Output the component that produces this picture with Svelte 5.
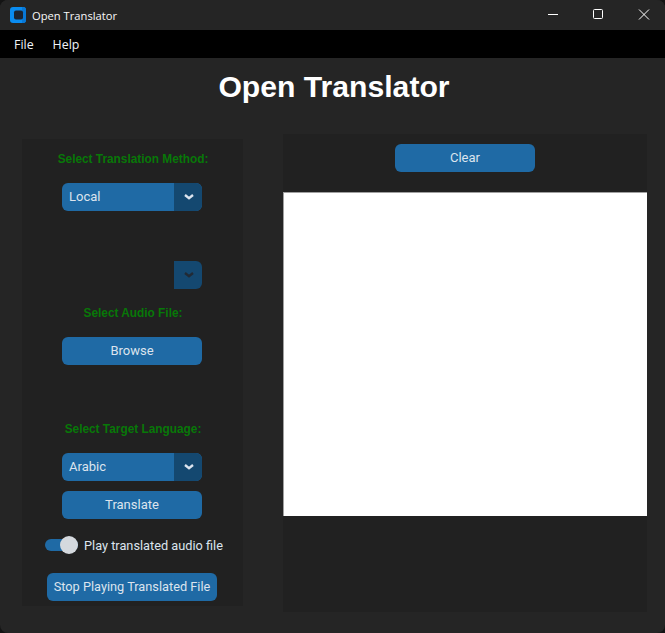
<script>
  let playAudio = true;
</script>

<div class="window">
  <header class="titlebar">
    <svg class="logo" width="16" height="16" viewBox="0 0 16 16">
      <rect width="16" height="16" rx="3" fill="#0a8cf0" />
      <path d="M12 0h1a3 3 0 0 1 3 3v10a3 3 0 0 1-3 3h-1z" fill="#0878d6" />
      <rect x="4" y="3.5" width="9" height="9" rx="2" fill="#1c2430" />
    </svg>
    <span class="app-name">Open Translator</span>
    <div class="controls">
      <svg width="46" height="30" viewBox="0 0 46 30"><path d="M19 14.5h10" stroke="#fff" fill="none" /></svg>
      <svg width="46" height="30" viewBox="0 0 46 30"><rect x="18.5" y="9.5" width="9" height="9" rx="1" stroke="#fff" fill="none" /></svg>
      <svg width="46" height="30" viewBox="0 0 46 30"><path d="M18 9.5l10 10M28 9.5l-10 10" stroke="#fff" fill="none" /></svg>
    </div>
  </header>

  <nav class="menubar">
    <span>File</span>
    <span>Help</span>
  </nav>

  <main>
    <h1>Open Translator</h1>
    <div class="columns">
      <section class="left">
        <h2>Select Translation Method:</h2>
        <div class="select first">
          <span class="value">Local</span>
          <span class="arrow"><svg width="10" height="6" viewBox="0 0 10 6"><path d="M1 1l4 3.2L9 1" stroke="#dce4ee" stroke-width="2.4" fill="none" /></svg></span>
        </div>
        <div class="select empty">
          <span class="value"></span>
          <span class="arrow"><svg width="10" height="6" viewBox="0 0 10 6"><path d="M1 1l4 3.2L9 1" stroke="#212a35" stroke-width="2.4" fill="none" /></svg></span>
        </div>
        <h2 class="audio">Select Audio File:</h2>
        <button class="btn browse">Browse</button>
        <h2 class="target">Select Target Language:</h2>
        <div class="select lang">
          <span class="value">Arabic</span>
          <span class="arrow"><svg width="10" height="6" viewBox="0 0 10 6"><path d="M1 1l4 3.2L9 1" stroke="#dce4ee" stroke-width="2.4" fill="none" /></svg></span>
        </div>
        <button class="btn translate">Translate</button>
        <label class="switch">
          <span class="track" class:on={playAudio}><span class="thumb"></span></span>
          <span>Play translated audio file</span>
        </label>
        <button class="btn stop">Stop Playing Translated File</button>
      </section>

      <section class="right">
        <button class="btn clear">Clear</button>
        <div class="canvas"></div>
      </section>
    </div>
  </main>
</div>

<style>
:global(body) {
  margin: 0;
  background: #141414;
}

.window {
  width: 665px;
  height: 633px;
  box-sizing: border-box;
  display: flex;
  flex-direction: column;
  background: #252525;
  overflow: hidden;
  border-radius: 8px;
  font-family: Roboto, sans-serif;
}

.titlebar {
  height: 30px;
  flex: none;
  display: flex;
  align-items: center;
  background: #252525;
  padding-left: 10px;
  color: #f8f8f8;
  font-family: "Open Sans", sans-serif;
  font-size: 11.2px;
}

.logo {
  margin-right: 6px;
}

.controls {
  margin-left: auto;
  margin-right: -2px;
  display: flex;
}

.controls svg {
  display: block;
}

.menubar {
  height: 28px;
  flex: none;
  display: flex;
  align-items: center;
  gap: 19px;
  padding-left: 14px;
  background: #000;
  color: #f0f4fa;
  font-family: "Open Sans", sans-serif;
  font-size: 12.4px;
}

main {
  flex: 1;
  display: flex;
  flex-direction: column;
}

h1 {
  margin: 11px 0 0;
  padding-left: 3px;
  height: 36px;
  line-height: 36px;
  text-align: center;
  font-family: "Liberation Sans", sans-serif;
  font-size: 30.15px;
  font-weight: 700;
  color: #fff;
}

.columns {
  display: flex;
  align-items: flex-start;
  padding-left: 22px;
  margin-top: 29px;
}

.left {
  width: 221px;
  height: 467px;
  box-sizing: border-box;
  margin-top: 5px;
  padding: 13px 1px 0 0;
  display: flex;
  flex-direction: column;
  align-items: center;
  background: #212121;
}

h2 {
  margin: 0 0 0 2px;
  height: 14px;
  line-height: 14px;
  font-family: "Liberation Sans", sans-serif;
  font-size: 11.85px;
  font-weight: 700;
  color: #087808;
}

.select {
  width: 140px;
  height: 28px;
  flex: none;
  display: flex;
  border-radius: 6px;
  overflow: hidden;
  background: #1f6aa5;
  color: #dce4ee;
  font-size: 13px;
}

.select.first {
  margin-top: 17px;
}

.select.empty {
  margin-top: 50px;
  background: transparent;
}

.select.lang {
  margin-top: 17px;
}

.value {
  flex: 1;
  padding-left: 7px;
  line-height: 27px;
}

.arrow {
  width: 28px;
  padding-left: 2px;
  box-sizing: border-box;
  display: flex;
  align-items: center;
  justify-content: center;
  background: #144870;
}

.audio {
  margin-top: 17px;
}

.target {
  margin-top: 57px;
}

.btn {
  width: 140px;
  height: 28px;
  flex: none;
  padding: 0 0 2px;
  border: none;
  border-radius: 6px;
  background: #1f6aa5;
  color: #dce4ee;
  font-family: Roboto, sans-serif;
  font-size: 13px;
  white-space: nowrap;
}

.browse {
  margin-top: 17px;
}

.translate {
  margin-top: 10px;
}

.switch {
  width: 178px;
  height: 20px;
  margin: 16px 0 0 4px;
  display: flex;
  align-items: center;
  gap: 6px;
  color: #dce4ee;
  font-size: 12.75px;
  white-space: nowrap;
}

.track {
  position: relative;
  width: 33px;
  height: 12px;
  flex: none;
  border-radius: 6px;
  background: #1f6aa5;
}

.thumb {
  position: absolute;
  top: -3px;
  right: 0;
  width: 18px;
  height: 18px;
  border-radius: 50%;
  background: #d5d9de;
}

.stop {
  width: 170px;
  margin-top: 18px;
  font-size: 12.75px;
}

.right {
  width: 364px;
  height: 478px;
  margin-left: 40px;
  padding-top: 10px;
  box-sizing: border-box;
  display: flex;
  flex-direction: column;
  align-items: center;
  background: #212121;
}

.canvas {
  width: 364px;
  height: 324px;
  box-sizing: border-box;
  margin-top: 20px;
  border-top: 1px solid #a0a0a0;
  border-left: 1px solid #a0a0a0;
  background: #fff;
}
</style>
